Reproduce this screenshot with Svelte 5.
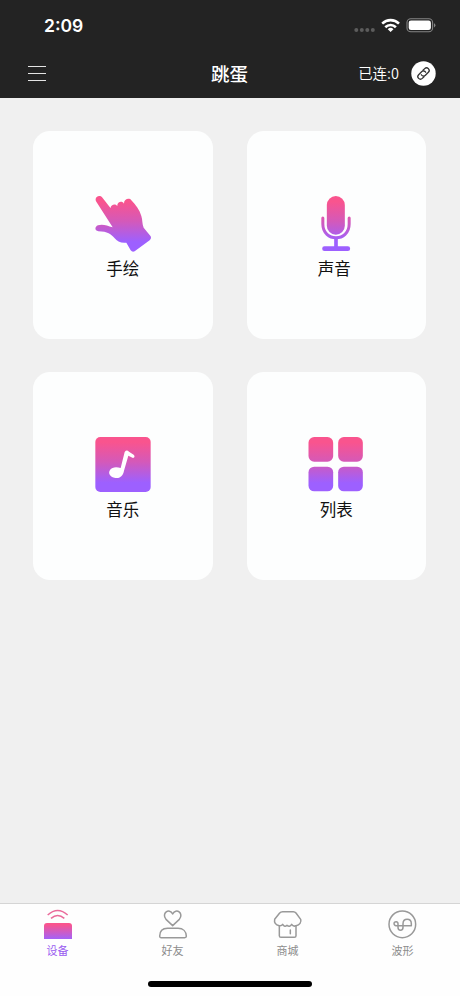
<script lang="ts">
  type Mode = { id: string; label: string };

  const modes: Mode[] = [
    { id: "draw", label: "手绘" },
    { id: "voice", label: "声音" },
    { id: "music", label: "音乐" },
    { id: "list", label: "列表" },
  ];

  const tabs = [
    { id: "device", label: "设备" },
    { id: "friends", label: "好友" },
    { id: "shop", label: "商城" },
    { id: "wave", label: "波形" },
  ];

  let active = $state("device");
  let connected = $state(0);
</script>

<svg class="defs" width="0" height="0" aria-hidden="true">
  <defs>
    <linearGradient id="tint" gradientUnits="userSpaceOnUse" x1="0" y1="33" x2="0" y2="201">
      <stop offset="0.1" stop-color="#f9548e" />
      <stop offset="0.45" stop-color="#d459b9" />
      <stop offset="0.82" stop-color="#9d60ff" />
    </linearGradient>
    <linearGradient id="tab-tint" gradientUnits="userSpaceOnUse" x1="0" y1="84" x2="0" y2="132">
      <stop offset="0.1" stop-color="#f9548e" />
      <stop offset="1" stop-color="#a462f8" />
    </linearGradient>
  </defs>
</svg>

<div class="screen">
  <header>
    <div class="status-bar">
      <span class="time">2:09</span>
      <svg class="status-icons" width="84" height="20" viewBox="0 0 84 20">
        <g fill="#5c5c5c">
          <circle cx="3.3" cy="14" r="2" />
          <circle cx="8.8" cy="14" r="2" />
          <circle cx="14.3" cy="14" r="2" />
          <circle cx="19.8" cy="14" r="2" />
        </g>
        <g fill="none" stroke="#fff" stroke-width="2.6">
          <path d="M29.2 7.6a12 12 0 0 1 16.8 0" />
          <path d="M32.3 11.2a7.6 7.6 0 0 1 10.6 0" />
        </g>
        <path d="M37.6 16 34.7 13.2a4.2 4.2 0 0 1 5.8 0Z" fill="#fff" />
        <rect x="54" y="2.7" width="25.6" height="13" rx="3.8" fill="none" stroke="#858585" stroke-width="1.1" />
        <rect x="55.7" y="4.4" width="22.2" height="9.6" rx="2.3" fill="#fff" />
        <path d="M81 7.2v4.2q1.4-.6 1.4-2.1T81 7.2Z" fill="#858585" />
      </svg>
    </div>
    <div class="nav-bar">
      <button class="menu" aria-label="menu"><i></i><i></i><i></i></button>
      <h1>跳蛋</h1>
      <div class="link-state">
        <span>已连:{connected}</span>
        <svg width="25" height="25" viewBox="0 0 25 25">
          <circle cx="12.5" cy="12.5" r="12.2" fill="#fff" />
          <g transform="rotate(-45 12.5 12.5)" fill="none" stroke="#333" stroke-width="1.3" stroke-linecap="round">
            <path d="M10.6 15.1H8.2a2.6 2.6 0 0 1 0-5.2h4.2a2.6 2.6 0 0 1 2.5 3.3" />
            <path d="M14.4 9.9h2.4a2.6 2.6 0 0 1 0 5.2h-4.2a2.6 2.6 0 0 1-2.5-3.3" />
          </g>
        </svg>
      </div>
    </div>
  </header>

  <main>
    {#each modes as mode}
      <button class="card {mode.id}">
        {#if mode.id === "draw"}
          <svg class="mode-icon" viewBox="46 33 168 168" fill="url(#tint)">
            <path d="M49 49C43 36 61 27 69 39L93 70C91 60 108 54 113 64C111 50 128 45 133 56C132 42 149 37 155 46C168 59 180 75 185 93C189 106 187 116 192 128L213 154Q216 161 210 166L165 199Q158 203 153 196L140 173C124 175 112 169 105 160C94 147 84 140 56 139C44 137 45 125 55 121C67 116 82 121 99 127Z" />
          </svg>
        {:else if mode.id === "voice"}
          <svg class="mode-icon" viewBox="55.5 33 168 168">
            <rect x="112" y="33" width="54" height="116" rx="27" fill="url(#tint)" />
            <path d="M100 99V117C100 172 179 172 179 117V99" fill="none" stroke="url(#tint)" stroke-width="9" stroke-linecap="round" />
            <path d="M134 157h11v30h-11zM105 184h70a7 7 0 0 1 0 14h-70a7 7 0 0 1 0-14Z" fill="url(#tint)" />
          </svg>
        {:else if mode.id === "music"}
          <svg class="mode-icon" viewBox="46 34 168 168">
            <rect x="47" y="34" width="166" height="165" rx="15" fill="url(#tint)" />
            <path d="M135 79Q141 71 148 78L162 87Q168 94 160 97L146 90L133 135C130 153 117 160 104 156C90 153 85 142 91 133C97 124 110 123 123 127Z" fill="#fff" />
          </svg>
        {:else}
          <svg class="mode-icon" viewBox="55.5 33 168 168" fill="url(#tint)">
            <rect x="57" y="33" width="74" height="74" rx="17" />
            <rect x="146" y="33" width="74" height="74" rx="17" />
            <rect x="57" y="122" width="74" height="74" rx="17" />
            <rect x="146" y="122" width="74" height="74" rx="17" />
          </svg>
        {/if}
        <span>{mode.label}</span>
      </button>
    {/each}
  </main>

  <footer>
    <nav>
      {#each tabs as tab}
        <button class="tab" class:active={active === tab.id} onclick={() => (active = tab.id)}>
          {#if tab.id === "device"}
            <svg class="tab-icon" viewBox="129 42 90 90">
              <path d="M132 132V93Q132 84 141 84H207Q216 84 216 93V132Z" fill="url(#tab-tint)" />
              <path d="M143 60Q173 33 203 60M153 70Q173 53 193 70" fill="none" stroke="#ea6b9b" stroke-width="4.5" />
            </svg>
          {:else if tab.id === "friends"}
            <svg class="tab-icon line" viewBox="473 42 90 90">
              <path d="M517 92L497 73C482 55 507 37 517 57C527 37 552 55 537 73Z" />
              <path d="M482 128Q478 128 478 124C478 109 487 100 502 100H533C548 100 558 109 558 124Q558 128 553 128Z" />
            </svg>
          {:else if tab.id === "shop"}
            <svg class="tab-icon line" viewBox="129 42 90 90">
              <path d="M148 92C136 90 132 82 134 73L149 54Q152 50 158 50H190Q195 50 198 54L212 73C215 82 209 90 198 92Q190 96 185 88Q179 98 171 91Q164 98 158 88Q155 93 148 92Z" />
              <path d="M148 92V122Q148 127 153 127H193Q198 127 198 122V92M181 105V116" />
            </svg>
          {:else}
            <svg class="tab-icon line" viewBox="473 42 90 90">
              <circle cx="516" cy="88" r="40" />
              <path d="M503 92H497A6 6 0 1 1 503 87V97C503 109 518 109 518 97V86C518 68 543 68 543 86V92H503" />
            </svg>
          {/if}
          <span>{tab.label}</span>
        </button>
      {/each}
    </nav>
    <div class="home-indicator"></div>
  </footer>
</div>

<style>
  :global(body) { margin: 0; }
  .defs { position: absolute; }
  .screen {
    display: flex; flex-direction: column; height: 996px;
    background: #f0f0f0; color: #111;
    font-family: "Noto Sans CJK SC", sans-serif;
  }
  button { padding: 0; border: 0; background: none; font: inherit; color: inherit; cursor: pointer; }
  svg { display: block; }

  header { height: 98px; background: #232323; color: #fff; }
  .status-bar {
    display: flex; justify-content: space-between; align-items: center;
    height: 50px; padding: 0 23px 0 44px; box-sizing: border-box;
  }
  .time { font: 600 17.5px/20px Inter, sans-serif; margin-top: 2px; }
  .status-icons { margin-top: 2px; }
  .nav-bar {
    display: grid; grid-template-columns: 1fr auto 1fr; align-items: center;
    height: 47px; padding: 0 24px 0 28px;
  }
  .menu { display: flex; flex-direction: column; gap: 6px; width: 18px; }
  .menu i { height: 1px; background: #e4e4e4; }
  h1 { margin: 0 5px 2px 0; font-size: 18.5px; font-weight: 500; line-height: 24px; }
  .link-state { display: flex; justify-content: flex-end; align-items: center; gap: 12px; font-size: 14.5px; line-height: 20px; }
  .link-state span { margin-bottom: 2px; font-weight: 350; }

  main {
    flex: 1; display: grid; grid-template-columns: 1fr 1fr; grid-auto-rows: 208px;
    align-content: start; gap: 33px 34px; padding: 33px 34px 0 33px;
  }
  .card {
    display: flex; flex-direction: column; align-items: center;
    padding-top: 65px; background: #fdfefe; border-radius: 17px;
    font-size: 16.5px; line-height: 24px;
  }
  .mode-icon { width: 56px; height: 56px; margin-bottom: 4px; }
  .voice span { margin-right: 4px; }

  footer { height: 93px; box-sizing: border-box; background: #fefefe; border-top: 1px solid #d5d5d5; }
  nav { display: grid; grid-template-columns: repeat(4, 1fr); height: 77px; }
  .tab { display: flex; flex-direction: column; align-items: center; padding-top: 5px; font-size: 11px; line-height: 16px; color: #8c8c8c; }
  .tab.active { color: #9a5cf0; }
  .tab-icon { width: 30px; height: 30px; margin-bottom: 3px; }
  .line { fill: none; stroke: #999; stroke-width: 4.5; stroke-linejoin: round; stroke-linecap: round; }
  .home-indicator { width: 164px; height: 6px; margin: 0 auto; border-radius: 3px; background: #000; }
</style>
